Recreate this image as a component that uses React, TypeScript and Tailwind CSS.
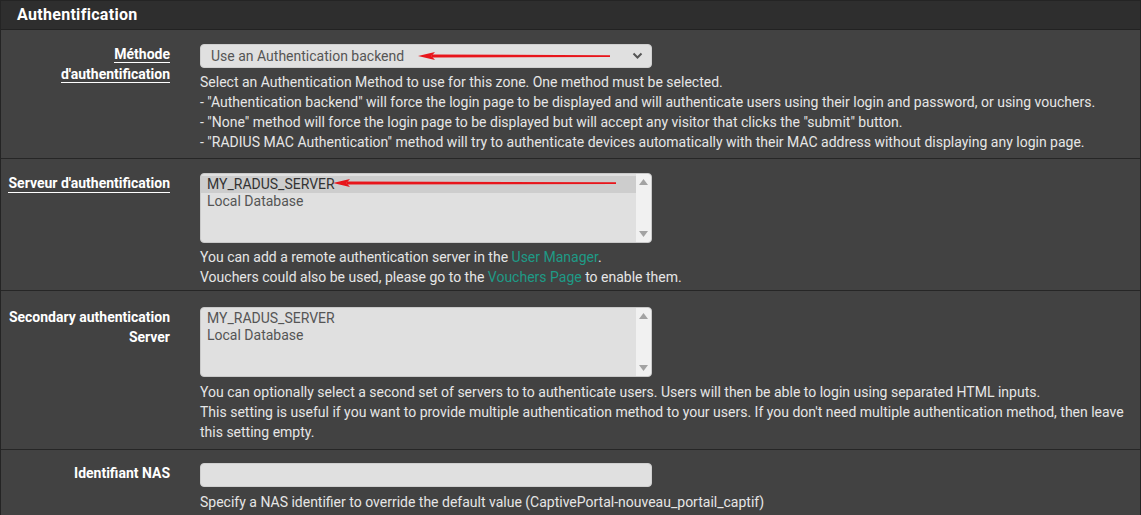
import React from "react";

const FONT = { fontFamily: "Roboto, 'Liberation Sans', sans-serif" };

// Flèche rouge dessinée par-dessus les champs
function RedArrow({ width }: { width: number }) {
  return (
    <svg width={width} height={10} viewBox={`0 0 ${width} 10`} className="block">
      <path d={`M14 3.6 L${width} 4.2 L${width} 6 L14 6.6 Z`} fill="#e8151b" />
      <path d="M0 5 L17 1 L13.5 5 L17 9 Z" fill="#e8151b" />
    </svg>
  );
}

function Scrollbar() {
  return (
    <div className="w-[15px] bg-[#f1f1f1] flex flex-col justify-between items-center py-[5px] rounded-r-[3px]">
      <svg width="9" height="6" viewBox="0 0 9 6">
        <path d="M4.5 0 L9 6 L0 6 Z" fill="#a3a3a3" />
      </svg>
      <svg width="9" height="6" viewBox="0 0 9 6">
        <path d="M0 0 L9 0 L4.5 6 Z" fill="#a3a3a3" />
      </svg>
    </div>
  );
}

function ListBox({ selected, arrow }: { selected?: boolean; arrow?: boolean }) {
  return (
    <div className="relative w-[452px] h-[70px] bg-[#e0e0e0] rounded-[4px] border border-[#c9c9c9] flex overflow-hidden">
      <div className="flex-1 pt-[2px] text-[14px] leading-[17px] text-[#555]">
        <div className={`pl-[6px] ${selected ? "bg-[#cdcdcd] text-[#333]" : ""}`}>MY_RADUS_SERVER</div>
        <div className="pl-[6px]">Local Database</div>
      </div>
      <Scrollbar />
      {arrow && (
        <div className="absolute left-[132px] top-[4px]">
          <RedArrow width={283} />
        </div>
      )}
    </div>
  );
}

function Row({
  label,
  children,
  last,
  pad,
}: {
  label: React.ReactNode;
  children: React.ReactNode;
  last?: boolean;
  pad: string;
}) {
  return (
    <div className={`flex ${pad} ${last ? "" : "border-b border-[#262626]"}`}>
      <div className="w-[169px] shrink-0 pl-[7px] text-right text-[14px] leading-[20px] font-bold text-white">
        {label}
      </div>
      <div className="ml-[30px] flex-1 pr-[15px]">{children}</div>
    </div>
  );
}

const help = "text-[14px] leading-[20px] text-[#e6e6e6]";
const link = "text-[#1e9a86]";

export default function App() {
  return (
    <div style={FONT} className="w-[1141px] h-[515px] overflow-hidden bg-[#424242] border-x border-t border-[#242424]">
      <div className="h-[29px] bg-[#2e2e2e] border-b border-[#222] flex items-center pl-[16px]">
        <h2 className="text-[16px] font-bold text-white tracking-[0.3px]">Authentification</h2>
      </div>

      <Row
        pad="pt-[14px] pb-[6px]"
        label={
          <span className="leading-[20px]">
            <span className="border-b border-white">Méthode</span>
            <br />
            <span className="border-b border-white">d'authentification</span>
          </span>
        }
      >
        <div className="relative w-[452px] h-[24px] bg-[#e0e0e0] rounded-[4px] border border-[#cfcfcf] flex items-center justify-between pl-[10px] pr-[8px] text-[14px] text-[#555]">
          <span>Use an Authentication backend</span>
          <svg width="11" height="8" viewBox="0 0 11 8">
            <path d="M1.5 1.5 L5.5 5.5 L9.5 1.5" stroke="#555" strokeWidth="2" fill="none" />
          </svg>
          <div className="absolute left-[217px] top-[6px]">
            <RedArrow width={192} />
          </div>
        </div>
        <div className={`${help} mt-[4px]`}>
          <p>Select an Authentication Method to use for this zone. One method must be selected.</p>
          <p>- "Authentication backend" will force the login page to be displayed and will authenticate users using their login and password, or using vouchers.</p>
          <p>- "None" method will force the login page to be displayed but will accept any visitor that clicks the "submit" button.</p>
          <p>- "RADIUS MAC Authentication" method will try to authenticate devices automatically with their MAC address without displaying any login page.</p>
        </div>
      </Row>

      <Row pad="pt-[14px] pb-[3px]" label={<span className="border-b border-white pb-[1px]">Serveur d'authentification</span>}>
        <ListBox selected arrow />
        <div className={`${help} mt-[4px]`}>
          <p>
            You can add a remote authentication server in the <span className={link}>User Manager</span>.
          </p>
          <p>
            Vouchers could also be used, please go to the <span className={link}>Vouchers Page</span> to enable them.
          </p>
        </div>
      </Row>

      <Row pad="pt-[16px] pb-[7px]" label="Secondary authentication Server">
        <ListBox />
        <div className={`${help} mt-[5px]`}>
          <p>
            You can optionally select a second set of servers to to authenticate users. Users will then be able to login using separated HTML inputs.
          </p>
          <p>
            This setting is useful if you want to provide multiple authentication method to your users. If you don't need multiple authentication method, then leave this setting empty.
          </p>
        </div>
      </Row>

      <Row pad="pt-[13px] pb-[6px]" label="Identifiant NAS" last>
        <div className="w-[452px] h-[24px] bg-[#e0e0e0] rounded-[4px] border border-[#cfcfcf]" />
        <div className={`${help} mt-[5px]`}>
          <p>Specify a NAS identifier to override the default value (CaptivePortal-nouveau_portail_captif)</p>
        </div>
      </Row>
    </div>
  );
}
